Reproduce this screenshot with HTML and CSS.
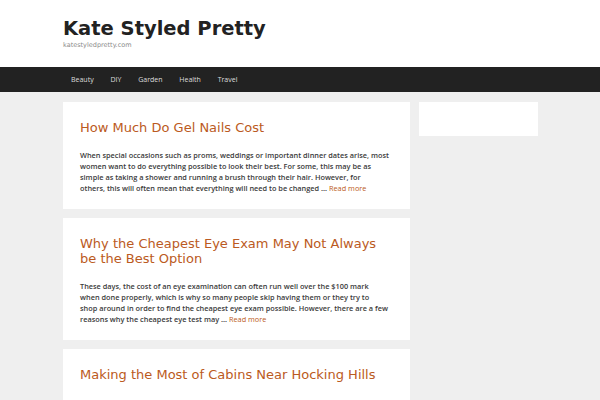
FILE: index.html
```html
<!DOCTYPE html>
<html>
<head>
<meta charset="utf-8">
<link rel="stylesheet" href="styles.css">
</head>
<body>
<header class="site-header">
  <div class="inner">
    <div class="site-title">Kate Styled Pretty</div>
    <div class="tagline">katestyledpretty.com</div>
  </div>
</header>
<nav class="nav">
  <div class="inner menu">
    <a>Beauty</a>
    <a>DIY</a>
    <a>Garden</a>
    <a>Health</a>
    <a>Travel</a>
  </div>
</nav>
<div class="inner content">
  <main class="main">
    <article class="card">
      <h2 class="entry-title">How Much Do Gel Nails Cost</h2>
      <p class="summary">When special occasions such as proms, weddings or important dinner dates arise, most<br>women want to do everything possible to look their best. For some, this may be as<br>simple as taking a shower and running a brush through their hair. However, for<br>others, this will often mean that everything will need to be changed … <a class="more">Read more</a></p>
    </article>
    <article class="card">
      <h2 class="entry-title">Why the Cheapest Eye Exam May Not Always<br>be the Best Option</h2>
      <p class="summary">These days, the cost of an eye examination can often run well over the $100 mark<br>when done properly, which is why so many people skip having them or they try to<br>shop around in order to find the cheapest eye exam possible. However, there are a few<br>reasons why the cheapest eye test may … <a class="more">Read more</a></p>
    </article>
    <article class="card">
      <h2 class="entry-title">Making the Most of Cabins Near Hocking Hills</h2>
      <p class="summary">Cabins near Hocking Hills offer a wonderful way to get away from it all and enjoy the<br>natural beauty of the area.</p>
    </article>
  </main>
  <aside class="sidebar">
    <div class="widget"></div>
  </aside>
</div>
</body>
</html>
```
FILE: styles.css
```css
html, body {
  margin: 0;
  padding: 0;
}
body {
  background: #efefef;
  font-family: "DejaVu Sans", sans-serif;
  color: #3a3a3a;
  height: 400px;
  overflow: hidden;
}
.inner {
  width: 475px;
  margin-left: 63px;
}
.site-header {
  background: #fff;
  height: 67px;
}
.site-header .inner {
  padding-top: 17px;
}
.site-title {
  font-weight: bold;
  font-size: 19.5px;
  line-height: 24px;
  color: #222;
}
.tagline {
  font-size: 6.5px;
  line-height: 9px;
  color: #8a8a8a;
}
.nav {
  background: #222;
  height: 25px;
}
.menu {
  display: flex;
  height: 25px;
  align-items: center;
}
.menu a {
  font-family: "Open Sans", sans-serif;
  color: #ddd;
  font-size: 7px;
  padding: 0 8.4px;
}
.menu a:first-child {
  padding-left: 8px;
}
.content {
  display: flex;
  gap: 9px;
  margin-top: 10px;
  align-items: flex-start;
}
.main {
  width: 347px;
  display: flex;
  flex-direction: column;
  gap: 9px;
}
.card {
  background: #fff;
  padding: 18px 10px 15px 17px;
}
.entry-title {
  font-weight: normal;
  font-size: 13px;
  line-height: 15px;
  color: #bb5a22;
  margin: 0 0 15px;
}
.summary {
  font-family: "Open Sans", sans-serif;
  font-weight: 600;
  font-size: 7.35px;
  line-height: 11px;
  margin: 0;
  color: #3a3a3a;
  white-space: nowrap;
}
.more {
  color: #bb5a22;
  font-weight: normal;
}
.sidebar {
  width: 119px;
}
.widget {
  background: #fff;
  height: 34px;
}
```
